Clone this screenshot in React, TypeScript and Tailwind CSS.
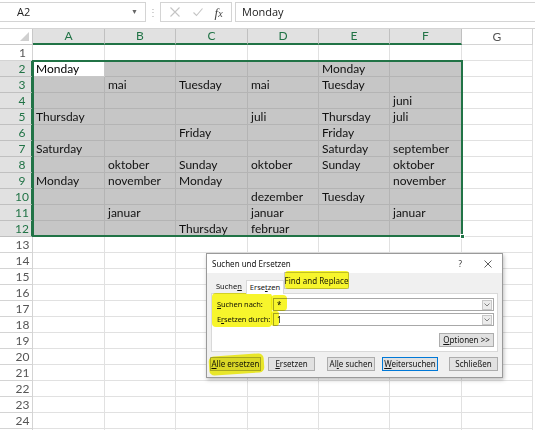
import React from 'react'

const COLS = ['A', 'B', 'C', 'D', 'E', 'F', 'G']
const WIDTHS = [72, 71, 72, 71, 71, 72, 71]

// rows 2..12, columns A..F
const DATA: Record<number, string[]> = {
  2: ['Monday', '', '', '', 'Monday', ''],
  3: ['', 'mai', 'Tuesday', 'mai', 'Tuesday', ''],
  4: ['', '', '', '', '', 'juni'],
  5: ['Thursday', '', '', 'juli', 'Thursday', 'juli'],
  6: ['', '', 'Friday', '', 'Friday', ''],
  7: ['Saturday', '', '', '', 'Saturday', 'september'],
  8: ['', 'oktober', 'Sunday', 'oktober', 'Sunday', 'oktober'],
  9: ['Monday', 'november', 'Monday', '', '', 'november'],
  10: ['', '', '', 'dezember', 'Tuesday', ''],
  11: ['', 'januar', '', 'januar', '', 'januar'],
  12: ['', '', 'Thursday', 'februar', '', ''],
}

const ROWS = Array.from({ length: 25 }, (_, i) => i + 1)

function isSel(row: number, col: number) {
  return row >= 2 && row <= 12 && col <= 5
}

function FormulaBar() {
  return (
    <div className="h-[28px] flex items-start pt-[2px] bg-white font-['Open_Sans',sans-serif]">
      <div className="w-[146px] h-[20px] border-y border-r border-[#d4d4d4] flex items-center justify-between pl-[17px] pr-[7px]">
        <span className="text-[11px] text-[#222]">A2</span>
        <span className="text-[7px] text-[#666]">▼</span>
      </div>
      <div className="w-[14px] h-[20px] flex items-center justify-center text-[10px] text-[#b0b0b0]">⋮</div>
      <div className="w-[72px] h-[20px] border border-[#d4d4d4] flex items-center justify-around px-[3px]">
        <svg width="12" height="12" viewBox="0 0 12 12">
          <path d="M1.5 1.5l9 9M10.5 1.5l-9 9" stroke="#c4c4c4" strokeWidth="1.1" />
        </svg>
        <svg width="12" height="12" viewBox="0 0 12 12">
          <path d="M1.5 6.5l3 3 6-7" stroke="#c4c4c4" strokeWidth="1.1" fill="none" />
        </svg>
        <span className="text-[13px] italic text-[#444] font-['Liberation_Serif',serif] leading-none">
          f<span className="text-[10px]">x</span>
        </span>
      </div>
      <div className="ml-[3px] flex-1 h-[20px] border-y border-l border-[#d4d4d4] flex items-center pl-[6px]">
        <span className="text-[11px] text-[#222]">Monday</span>
      </div>
    </div>
  )
}

function Grid() {
  return (
    <div className="relative font-['Lato',sans-serif]">
      <div className="grid grid-cols-[33px_72px_71px_72px_71px_71px_72px_71px] auto-rows-[16px] border-t border-[#d4d4d4]">
        {/* header row */}
        <div className="relative bg-white border-r border-b border-[#c8c8c8]">
          <div className="absolute right-[3px] bottom-[3px] w-0 h-0 border-l-[9px] border-l-transparent border-b-[9px] border-b-[#d0d0d0]" />
        </div>
        {COLS.map((c, i) => (
          <div
            key={c}
            className={
              i < 6
                ? 'flex items-center justify-center text-[12px] text-[#217346] bg-[#e1e1e1] border-r border-[#c0c0c0] border-b-2 border-b-[#217346]'
                : 'flex items-center justify-center text-[12px] text-[#555] bg-white border-r border-b border-[#d4d4d4]'
            }
          >
            {c}
          </div>
        ))}

        {ROWS.map(r => (
          <React.Fragment key={r}>
            <div
              className={
                r >= 2 && r <= 12
                  ? 'flex items-center justify-center pl-[13px] text-[12px] text-[#217346] bg-[#e1e1e1] border-b border-[#c0c0c0] border-r-2 border-r-[#217346]'
                  : 'flex items-center justify-center pl-[13px] text-[12px] text-[#555] bg-white border-b border-r border-[#d4d4d4]'
              }
            >
              {r < 25 ? r : ''}
            </div>
            {WIDTHS.map((_, ci) => {
              const sel = isSel(r, ci)
              const active = r === 2 && ci === 0
              const text = sel ? DATA[r]?.[ci] ?? '' : ''
              return (
                <div
                  key={ci}
                  className={
                    active
                      ? 'flex items-center pl-[3px] text-[12px] text-black bg-white border-r border-b border-[#c8c8c8] overflow-hidden whitespace-nowrap'
                      : sel
                        ? 'flex items-center pl-[3px] text-[12px] text-[#111] bg-[#c6c6c6] border-r border-b border-[#b4b4b4] overflow-hidden whitespace-nowrap'
                        : 'bg-white border-r border-b border-[#e1e1e1]'
                  }
                >
                  {text}
                </div>
              )
            })}
          </React.Fragment>
        ))}
      </div>

      {/* selection outline A2:F12 */}
      <div className="absolute left-[32px] top-[32px] w-[431px] h-[177px] border-2 border-[#217346] pointer-events-none">
        <div className="absolute -right-[4px] -bottom-[4px] w-[5px] h-[5px] bg-[#217346] border border-white" />
      </div>
    </div>
  )
}

function Btn({ children, w, blue }: { children: React.ReactNode; w: string; blue?: boolean }) {
  return (
    <div
      className={`${w} h-[14px] flex items-center justify-center whitespace-nowrap text-[8px] text-[#111] bg-[#e1e1e1] ${
        blue ? 'border-[1.5px] border-[#0078d7]' : 'border border-[#adadad]'
      }`}
    >
      {children}
    </div>
  )
}

function Dropdown({ value }: { value: string }) {
  return (
    <div className="flex-1 h-[13px] bg-white border border-[#a8a8a8] flex items-center justify-between pl-[3px] pr-[1px]">
      <span className="text-[8px] text-black leading-none">{value}</span>
      <div className="w-[10px] h-[10px] bg-[#ececec] border border-[#c8c8c8] flex items-center justify-center">
        <svg width="6" height="4" viewBox="0 0 6 4">
          <path d="M0.5 0.5l2.5 2.5 2.5-2.5" stroke="#666" strokeWidth="0.8" fill="none" />
        </svg>
      </div>
    </div>
  )
}

function Dialog() {
  return (
    <div className="absolute left-[206px] top-[253px] w-[297px] h-[125px] bg-[#f0f0f0] border border-[#9a9a9a] shadow-[1px_2px_4px_rgba(0,0,0,0.25)] flex flex-col font-['Noto_Sans',sans-serif] text-[#111] whitespace-nowrap">
      <div className="h-[19px] bg-white flex items-center justify-between pl-[5px] pr-[10px]">
        <span className="text-[8px]">Suchen und Ersetzen</span>
        <div className="flex items-center gap-[22px]">
          <span className="text-[8px] text-[#333]">?</span>
          <svg width="8" height="8" viewBox="0 0 8 8">
            <path d="M0.5 0.5l7 7M7.5 0.5l-7 7" stroke="#333" strokeWidth="0.8" />
          </svg>
        </div>
      </div>

      <div className="px-[4px] flex-1 flex flex-col">
        {/* tabs */}
        <div className="h-[20px] flex items-end pl-[1px]">
          <div className="h-[13px] px-[4px] flex items-center text-[7.5px]">
            <span>Suche<span className="underline">n</span></span>
          </div>
          <div className="h-[14px] px-[3px] flex items-center text-[7.5px] bg-white border-t border-x border-[#d9d9d9] -mb-px relative z-10">
            <span>Erse<span className="underline">t</span>zen</span>
          </div>
        </div>

        {/* panel */}
        <div className="h-[59px] bg-white border border-[#d9d9d9] flex flex-col pt-[4px] pl-[5px] pr-[3px]">
          <div className="flex items-center">
            <span className="w-[56px] shrink-0 text-[7.5px] tracking-[-0.1px]"><span className="underline">S</span>uchen nach:</span>
            <Dropdown value="*" />
          </div>
          <div className="flex items-center mt-[2px]">
            <span className="w-[56px] shrink-0 text-[7.5px] tracking-[-0.1px]">E<span className="underline">r</span>setzen durch:</span>
            <Dropdown value="1" />
          </div>
          <div className="flex justify-end mt-[7px]">
            <Btn w="w-[55px]">
              <span><span className="underline">O</span>ptionen &gt;&gt;</span>
            </Btn>
          </div>
        </div>

        {/* buttons */}
        <div className="flex items-center mt-[5px] -ml-px">
          <Btn w="w-[52px]">
            <span><span className="underline">A</span>lle ersetzen</span>
          </Btn>
          <div className="ml-[7px]">
            <Btn w="w-[47px]">
              <span><span className="underline">E</span>rsetzen</span>
            </Btn>
          </div>
          <div className="ml-[12px]">
            <Btn w="w-[48px]">
              <span>Al<span className="underline">l</span>e suchen</span>
            </Btn>
          </div>
          <div className="ml-[7px]">
            <Btn w="w-[56px]" blue>
              <span><span className="underline">W</span>eitersuchen</span>
            </Btn>
          </div>
          <div className="ml-[11px]">
            <Btn w="w-[49px]">Schließen</Btn>
          </div>
        </div>
      </div>
    </div>
  )
}

function Highlights() {
  return (
    <div className="pointer-events-none">
      {/* tooltip label */}
      <div className="absolute left-[284px] top-[272px] w-[65px] h-[17px] bg-white border border-[#c8c8c8] flex items-center justify-center whitespace-nowrap font-['Noto_Sans',sans-serif] text-[8px] text-[#222]">
        Find and Replace
      </div>
      <div className="absolute left-[285px] top-[271px] w-[64px] h-[18px] rounded-[3px] bg-[#f7f52c] mix-blend-multiply" />
      {/* labels */}
      <div className="absolute left-[212px] top-[293px] w-[60px] h-[34px] rounded-[4px] bg-[#f7f52c] mix-blend-multiply" />
      <div className="absolute left-[271px] top-[295px] w-[16px] h-[16px] rounded-[4px] bg-[#f7f52c] mix-blend-multiply" />
      <div className="absolute left-[271px] top-[311px] w-[8px] h-[15px] rounded-[3px] bg-[#f7f52c] mix-blend-multiply" />
      {/* Alle ersetzen */}
      <div className="absolute left-[209px] top-[355px] w-[55px] h-[19px] rounded-[5px] -rotate-[4deg] bg-[#f7f52c] mix-blend-multiply" />
    </div>
  )
}

export default function App() {
  return (
    <div className="relative w-[535px] h-[430px] overflow-hidden bg-white">
      <FormulaBar />
      <Grid />
      <Dialog />
      <Highlights />
    </div>
  )
}
